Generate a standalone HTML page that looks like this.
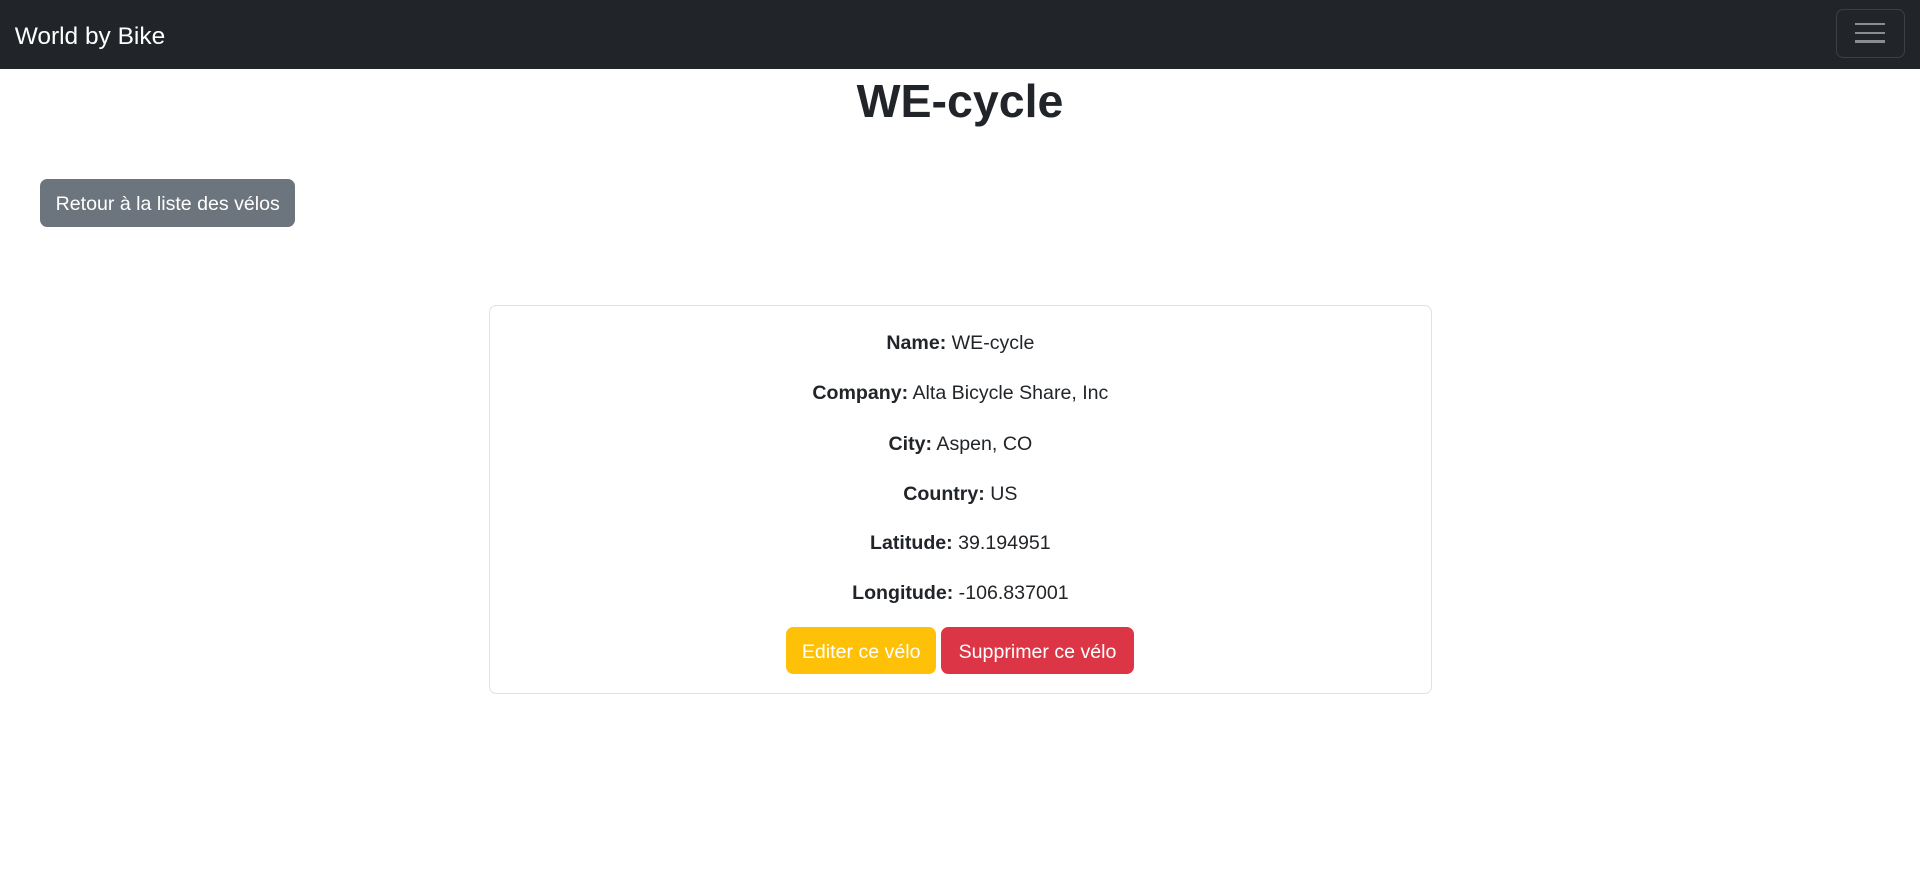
<!DOCTYPE html>
<html><head><meta charset="utf-8"><style>
html{zoom:1.22449}
body{margin:0;font-family:"Liberation Sans",sans-serif;color:#212529;font-size:16px;width:1568px;height:726px;overflow:hidden;background:#fff}
.nav{height:56px;background:#212529;position:relative}
.brand{position:absolute;left:12px;top:16px;font-size:20px;color:#fff;line-height:28px}
.tog{position:absolute;left:1499px;top:7px;width:55px;height:39px;border:1px solid rgba(255,255,255,.12);border-radius:6px}
.tog i{position:absolute;left:15px;width:25px;height:2px;background:#8a8d90}
h1{margin:0;position:absolute;top:57px;left:0;width:1568px;text-align:center;font-size:38px;font-weight:bold;line-height:52px}
.back{position:absolute;left:33px;top:146px;width:208px;height:39px;background:#6c757d;color:#fff;border-radius:6px;text-align:center;line-height:41px;font-size:16px}
.card{position:absolute;left:399px;top:249px;width:769px;height:316px;border:1px solid #dee2e6;border-radius:6px;text-align:center}
.card p{margin:0;position:absolute;left:0;width:100%;line-height:24px;font-size:16px}
.btn{position:absolute;top:262px;height:39px;line-height:41px;color:#fff;border-radius:6px;text-align:center}
</style></head><body>
<div class="nav"><div class="brand">World by Bike</div><div class="tog"><i style="top:11px"></i><i style="top:18px"></i><i style="top:25px"></i></div></div>
<h1>WE-cycle</h1>
<div class="back">Retour à la liste des vélos</div>
<div class="card">
<p style="top:19px"><b>Name:</b> WE-cycle</p>
<p style="top:60px"><b>Company:</b> Alta Bicycle Share, Inc</p>
<p style="top:101px"><b>City:</b> Aspen, CO</p>
<p style="top:142px"><b>Country:</b> US</p>
<p style="top:182px"><b>Latitude:</b> 39.194951</p>
<p style="top:223px"><b>Longitude:</b> -106.837001</p>
<div class="btn" style="left:242px;width:123px;background:#ffc107">Editer ce vélo</div>
<div class="btn" style="left:369px;width:157px;background:#dc3545">Supprimer ce vélo</div>
</div>
</body></html>
